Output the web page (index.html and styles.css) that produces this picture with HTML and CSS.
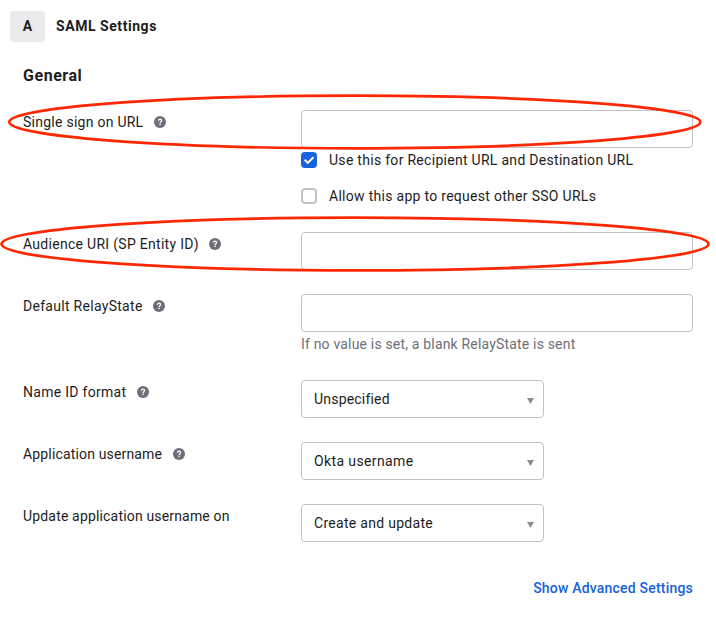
FILE: index.html
```html
<!DOCTYPE html>
<html lang="en">
<head>
<meta charset="utf-8">
<title>SAML Settings</title>
<link rel="stylesheet" href="styles.css">
</head>
<body>
<svg class="defs" width="0" height="0" aria-hidden="true">
  <symbol id="help" viewBox="0 0 12 12">
    <circle cx="6" cy="6" r="6" fill="#6e6e78"/>
    <path d="M4.4 4.7C4.5 3.7 5.2 3.2 6.1 3.2C7 3.2 7.6 3.8 7.6 4.6C7.6 5.6 6.1 5.7 6.1 6.9" fill="none" stroke="#fff" stroke-width="1.3"/>
    <rect x="5.4" y="7.7" width="1.4" height="1.4" fill="#fff"/>
  </symbol>
</svg>
<main class="panel">
  <header class="header">
    <span class="step">A</span>
    <h1 class="title">SAML Settings</h1>
  </header>
  <h2 class="section">General</h2>
  <form class="form">
    <div class="row">
      <div class="label"><span class="t-sso">Single sign on URL</span><svg class="help"><use href="#help"/></svg></div>
      <div class="control">
        <div class="field"></div>
        <div class="check"><span class="box checked"><svg viewBox="0 0 16 16"><path d="M3.7 7.8L6.8 10.9L12.4 5.3"/></svg></span><span>Use this for Recipient URL and Destination URL</span></div>
        <div class="check"><span class="box"></span><span>Allow this app to request other SSO URLs</span></div>
      </div>
    </div>
    <div class="row">
      <div class="label"><span>Audience URI (SP Entity ID)</span><svg class="help"><use href="#help"/></svg></div>
      <div class="control"><div class="field"></div></div>
    </div>
    <div class="row">
      <div class="label"><span>Default RelayState</span><svg class="help"><use href="#help"/></svg></div>
      <div class="control">
        <div class="field"></div>
        <div class="hint">If no value is set, a blank RelayState is sent</div>
      </div>
    </div>
    <div class="row">
      <div class="label"><span>Name ID format</span><svg class="help"><use href="#help"/></svg></div>
      <div class="control"><div class="field select"><span class="t-unspec">Unspecified</span><svg class="arrow" viewBox="0 0 7 6"><path d="M0 0H7L3.5 6Z"/></svg></div></div>
    </div>
    <div class="row">
      <div class="label"><span class="t-appuser">Application username</span><svg class="help"><use href="#help"/></svg></div>
      <div class="control"><div class="field select"><span class="t-okta">Okta username</span><svg class="arrow" viewBox="0 0 7 6"><path d="M0 0H7L3.5 6Z"/></svg></div></div>
    </div>
    <div class="row">
      <div class="label"><span class="t-update">Update application username on</span></div>
      <div class="control"><div class="field select"><span>Create and update</span><svg class="arrow" viewBox="0 0 7 6"><path d="M0 0H7L3.5 6Z"/></svg></div></div>
    </div>
  </form>
  <footer class="footer"><a class="link">Show Advanced Settings</a></footer>
  <svg class="marks" viewBox="0 0 716 628" aria-hidden="true">
    <ellipse cx="354.8" cy="122" rx="345.5" ry="26.3"/>
    <ellipse cx="355" cy="244" rx="353.5" ry="26.4"/>
  </svg>
</main>
</body>
</html>
```
FILE: styles.css
```css
* { box-sizing: border-box; }
body {
  margin: 0;
  background: #fff;
  color: #1d1d21;
  font: 14px/24px Roboto, "Liberation Sans", sans-serif;
  letter-spacing: 0.29px;
}
.defs { position: absolute; }
.panel {
  position: relative;
  width: 716px;
  height: 628px;
  padding: 11px 23px 0;
  overflow: hidden;
}
.header { display: flex; align-items: center; gap: 11px; margin-left: -13px; }
.step {
  width: 35px;
  height: 31px;
  border-radius: 4px;
  background: #ebebed;
  font-weight: 700;
  line-height: 31px;
  text-align: center;
}
.title { margin: 0; font-size: 14px; font-weight: 700; line-height: 31px; letter-spacing: 0.55px; }
.section { margin: 22px 0 22px; font-size: 16px; font-weight: 700; line-height: 24px; letter-spacing: 0.55px; }
.form { display: flex; flex-direction: column; gap: 24px; }
.row { display: grid; grid-template-columns: 278px 392px; }
.label { display: flex; align-items: center; gap: 10.5px; height: 24px; white-space: nowrap; }
.t-sso { letter-spacing: 0.26px; }
.t-appuser { letter-spacing: 0.16px; }
.t-update { letter-spacing: 0.17px; }
.t-unspec { letter-spacing: 0.2px; }
.t-okta { letter-spacing: 0.38px; }
.help { width: 12px; height: 12px; }
.field { height: 38px; border: 1px solid #c1c1c8; border-radius: 4px; background: #fff; }
.select {
  display: flex;
  align-items: center;
  justify-content: space-between;
  width: 243px;
  padding: 0 9px 0 12px;
}
.arrow { width: 7px; height: 6px; margin-top: 3px; fill: #8c8c8c; }
.check { display: flex; align-items: center; gap: 12px; height: 24px; white-space: nowrap; }
.check + .check { margin-top: 12px; }
.box { width: 16px; height: 16px; border: 2px solid #c1c1c8; border-radius: 4px; }
.checked { border: 0; background: #1662dd; }
.checked svg { display: block; fill: none; stroke: #fff; stroke-width: 2; }
.hint { color: #6e6e78; letter-spacing: 0.18px; white-space: nowrap; }
.footer { display: flex; justify-content: flex-end; margin-top: 34px; }
.link { color: #1662dd; font-weight: 500; letter-spacing: 0.2px; }
.marks {
  position: absolute;
  inset: 0;
  width: 716px;
  height: 628px;
  fill: none;
  stroke: #ff2600;
  stroke-width: 2.7;
  pointer-events: none;
}
```
